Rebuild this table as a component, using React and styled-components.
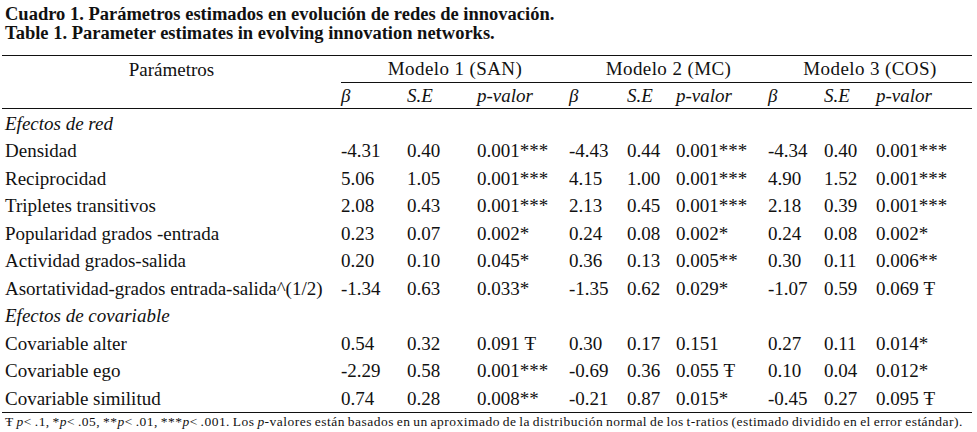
import React from "react";
import styled, { createGlobalStyle } from "styled-components";

const Global = createGlobalStyle`
  html, body { margin: 0; padding: 0; background: #fff; }
  body { font-family: "Liberation Serif", "Times New Roman", serif; color: #111; }
`;

const Page = styled.div`
  width: 977px;
  height: 432px;
  overflow: hidden;
  padding: 5px 0 0 2px;
  box-sizing: border-box;
`;

const Title = styled.div`
  font-family: "Liberation Serif", "Times New Roman", serif;
  font-weight: bold;
  font-size: 18.5px;
  line-height: 19px;
  padding-left: 3px;
  margin-bottom: 12px;
`;

const Grid = styled.div`
  display: grid;
  width: 970px;
  grid-template-columns: 339px 66px 70px 92px 58px 49px 92px 56px 52px 96px;
  border-top: 1px solid #111;
  border-bottom: 1px solid #111;
  font-size: 19px;
`;

const Cell = styled.div`
  display: flex;
  align-items: center;
  height: ${(p) => p.$h || 27.5}px;
  padding-left: ${(p) => (p.$label ? 3 : 0)}px;
  font-style: ${(p) => (p.$italic ? "italic" : "normal")};
  justify-content: ${(p) => (p.$center ? "center" : "flex-start")};
  grid-column: ${(p) => p.$span || "auto"};
  white-space: nowrap;
  box-sizing: border-box;
  padding-top: ${(p) => p.$pt || 0}px;
`;

const GroupHead = styled(Cell)`
  border-bottom: 1px solid #111;
  letter-spacing: 0.4px;
`;

const SubHead = styled(Cell)`
  border-bottom: 1px solid #111;
  font-style: italic;
`;

const Foot = styled.div`
  font-size: 13.5px;
  line-height: 18px;
  padding-left: 3px;
  letter-spacing: 0.48px;
  word-spacing: -1px;
  white-space: nowrap;
`;

const DAG = "Ŧ";

const rows = [
  { section: "Efectos de red" },
  { l: "Densidad", v: ["-4.31", "0.40", "0.001***", "-4.43", "0.44", "0.001***", "-4.34", "0.40", "0.001***"] },
  { l: "Reciprocidad", v: ["5.06", "1.05", "0.001***", "4.15", "1.00", "0.001***", "4.90", "1.52", "0.001***"] },
  { l: "Tripletes transitivos", v: ["2.08", "0.43", "0.001***", "2.13", "0.45", "0.001***", "2.18", "0.39", "0.001***"] },
  { l: "Popularidad grados -entrada", v: ["0.23", "0.07", "0.002*", "0.24", "0.08", "0.002*", "0.24", "0.08", "0.002*"] },
  { l: "Actividad grados-salida", v: ["0.20", "0.10", "0.045*", "0.36", "0.13", "0.005**", "0.30", "0.11", "0.006**"] },
  { l: "Asortatividad-grados entrada-salida^(1/2)", v: ["-1.34", "0.63", "0.033*", "-1.35", "0.62", "0.029*", "-1.07", "0.59", `0.069 ${DAG}`] },
  { section: "Efectos de covariable" },
  { l: "Covariable alter", v: ["0.54", "0.32", `0.091 ${DAG}`, "0.30", "0.17", "0.151", "0.27", "0.11", "0.014*"] },
  { l: "Covariable ego", v: ["-2.29", "0.58", "0.001***", "-0.69", "0.36", `0.055 ${DAG}`, "0.10", "0.04", "0.012*"] },
  { l: "Covariable similitud", v: ["0.74", "0.28", "0.008**", "-0.21", "0.87", "0.015*", "-0.45", "0.27", `0.095 ${DAG}`] },
];

export default function App() {
  return (
    <Page>
      <Global />
      <Title>
        Cuadro 1. Parámetros estimados en evolución de redes de innovación.
        <br />
        Table 1. Parameter estimates in evolving innovation networks.
      </Title>
      <Grid>
        <Cell $center $h={27}>Parámetros</Cell>
        <GroupHead $center $span="span 3" $h={27}>Modelo 1 (SAN)</GroupHead>
        <GroupHead $center $span="span 3" $h={27}>Modelo 2 (MC)</GroupHead>
        <GroupHead $center $span="span 3" $h={27}>Modelo 3 (COS)</GroupHead>
        <SubHead $h={26} />
        {["β", "S.E", "p-valor", "β", "S.E", "p-valor", "β", "S.E", "p-valor"].map((h, i) => (
          <SubHead key={i} $h={26}>{h}</SubHead>
        ))}
        {rows.map((r, i) =>
          r.section ? (
            <Cell key={i} $label $italic $span="1 / -1" $pt={2}>{r.section}</Cell>
          ) : (
            <React.Fragment key={i}>
              <Cell $label $pt={2}>{r.l}</Cell>
              {r.v.map((v, j) => (
                <Cell key={j} $pt={2}>{v}</Cell>
              ))}
            </React.Fragment>
          )
        )}
      </Grid>
      <Foot>
        {DAG} <i>p</i>&lt; .1, *<i>p</i>&lt; .05, **<i>p</i>&lt; .01, ***<i>p</i>&lt; .001. Los <i>p</i>-valores están basados en un aproximado de la distribución normal de los t-ratios (estimado dividido en el error estándar).
      </Foot>
    </Page>
  );
}
